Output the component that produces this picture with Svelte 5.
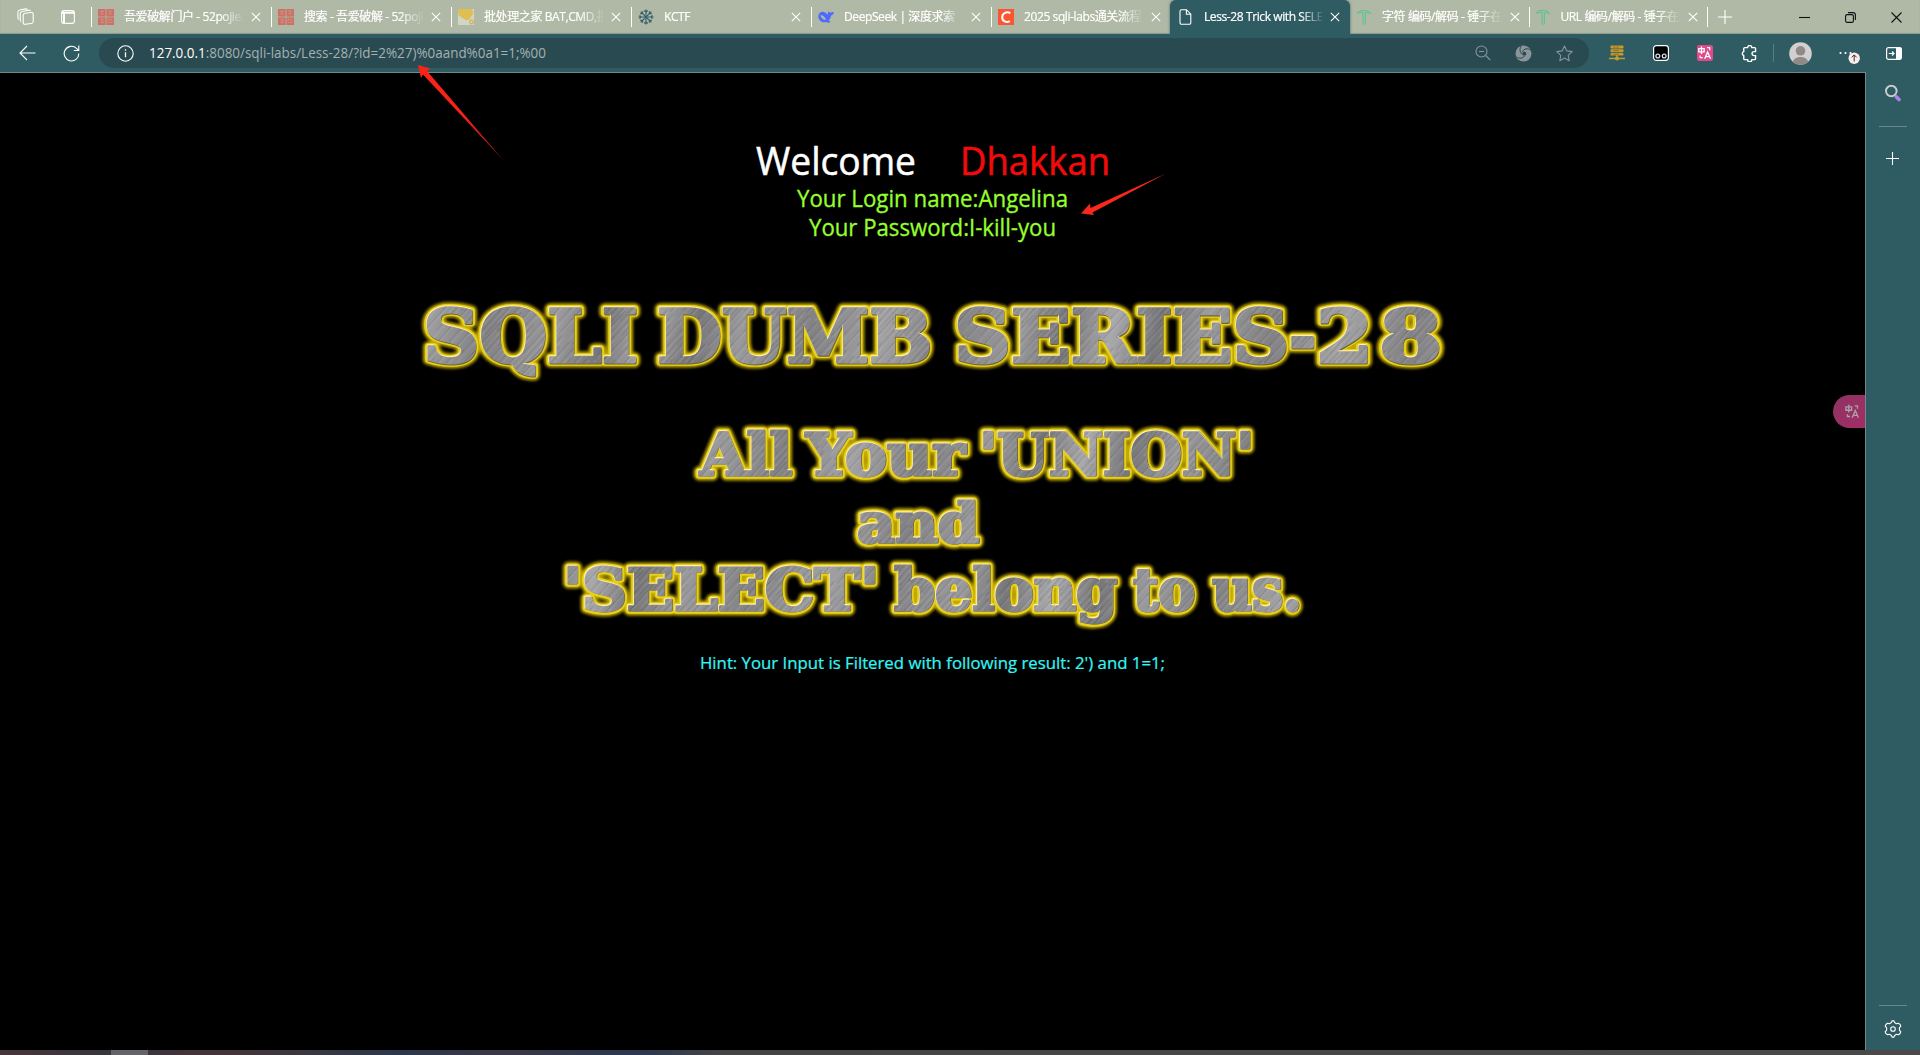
<script>
  const tabs = [
    { title: '吾爱破解门户 - 52pojie.cn', icon: 'seal' },
    { title: '搜索 - 吾爱破解 - 52pojie', icon: 'seal' },
    { title: '批处理之家 BAT,CMD,批处理', icon: 'batch' },
    { title: 'KCTF', icon: 'snow' },
    { title: 'DeepSeek | 深度求索', icon: 'whale' },
    { title: '2025 sqli-labs通关流程', icon: 'csdn' },
    { title: 'Less-28 Trick with SELECT', icon: 'page', active: true },
    { title: '字符 编码/解码 - 锤子在线', icon: 'hammer' },
    { title: 'URL 编码/解码 - 锤子在线', icon: 'hammer' },
  ];

  // Word placement on the banner artwork: baseline, left edge and width.
  const words = [
    { t: 'SQLI', x: 423, y: 290, w: 215, s: 72 },
    { t: 'DUMB', x: 657, y: 290, w: 275, s: 72 },
    { t: 'SERIES', x: 954, y: 290, w: 335, s: 72 },
    { t: '-', x: 1289, y: 290, w: 27, s: 72 },
    { t: '2', x: 1316, y: 290, w: 57, s: 72 },
    { t: '8', x: 1379, y: 290, w: 63, s: 72 },
    { t: 'All', x: 700, y: 402.5, w: 92, s: 57 },
    { t: 'Your', x: 806, y: 402.5, w: 159, s: 57 },
    { t: "'UNION'", x: 979, y: 402.5, w: 275, s: 57 },
    { t: 'and', x: 857, y: 469.5, w: 122, s: 55 },
    { t: "'SELECT'", x: 563, y: 537.5, w: 316, s: 57 },
    { t: 'belong', x: 894, y: 537.5, w: 223, s: 57 },
    { t: 'to', x: 1133, y: 537.5, w: 62, s: 57 },
    { t: 'us.', x: 1212, y: 537.5, w: 90, s: 57 },
  ];
</script>

{#snippet fit(text, w, size, color)}
  <svg class="fit" width={w} height={size * 1.3} fill={color} stroke={color} stroke-width={size / 75} font-size={size}>
    <text x="0" y={size} textLength={w} lengthAdjust="spacingAndGlyphs">{text}</text>
  </svg>
{/snippet}

{#snippet cross()}
  <svg width="10" height="10" viewBox="0 0 10 10" class="line"><path d="M.8.8 9.2 9.2M9.2.8.8 9.2" /></svg>
{/snippet}

{#snippet translate(c)}
  <g fill="none" stroke={c} stroke-width="1.3">
    <path d="M1.800 3.700h5.400v3.100H1.800zM4.500 1.600v7.400M10 2.700h2.700v2.600M3.200 10.500v2.200h2.600M7.700 13.800 10.600 7l2.900 6.800M8.700 11.600h3.800" />
  </g>
{/snippet}

{#snippet favicon(name)}
  <svg width="16" height="16" viewBox="0 0 16 16">
    {#if name === 'seal'}
      <rect width="7.600" height="7.600" fill="#cb7166" />
      <rect x="8.400" width="7.600" height="7.600" fill="#cb7166" />
      <rect y="8.400" width="7.600" height="7.600" fill="#cb7166" />
      <rect x="8.400" y="8.400" width="7.600" height="7.600" fill="#cb7166" />
      <path d="M1.500 2.500h4.600M2.500 5h3M4 1.200v5M10 2h4.500M10.500 4.500h3M12 1.200v5M2 10.700h4M2.200 13.200h4M4.200 9.700v5M10 10.500h4v3h-4z" stroke="#cf9c90" stroke-width=".6" fill="none" />
    {:else if name === 'batch'}
      <rect width="16" height="16" fill="#d2d4c4" />
      <path d="M0 0h14l1.500 3-1.500 3.500L10.500 11h-3L4.500 9 1 6.500 0 4z" fill="#dfbe52" />
      <circle cx="13.500" cy="13" r="1.800" fill="none" stroke="#d8ae4c" stroke-width="1.200" />
    {:else if name === 'snow'}
      <g stroke="#35606d" stroke-width="1.100" fill="none">
        {#each [0, 45, 90, 135, 180, 225, 270, 315] as a}
          <path d="M8 8V.5M6.300 1.500 8 3.200l1.700-1.700" transform={`rotate(${a} 8 8)`} />
        {/each}
      </g>
    {:else if name === 'whale'}
      <path d="M.3 7C.5 3.800 3.500 2 6.200 3c1.800.7 2.500 2.200 3.900 2.600C9.700 4.300 9.900 3.300 10.500 2.300c.7 1.300 1.700 1.600 2.700 1.200 1-.4 1.800-.6 2.600-.3-.3 1.900-1.300 3.200-2.800 3.400-.2 2.100-.9 3.600-2.100 4.800l1.500 1.700c-1.400.9-2.900.6-4-.2C4.300 14.500.1 11.500.3 7z" fill="#4d6bfe" />
      <path d="M2.300 6.300c2.600-.3 4.600 1.600 5.800 4.300-2 .8-4.600-.8-5.800-4.300z" fill="#b0b9a6" />
    {:else if name === 'csdn'}
      <rect width="16" height="16" fill="#fc5531" />
      <path d="M12.300 4.200C9 2.200 4.200 3.800 4.200 8.200c0 4.200 4 5.800 7.700 4" fill="none" stroke="#fff" stroke-width="2" />
    {:else if name === 'page'}
      <path d="M3.500.7h5l4.300 4.500v8.600a1.500 1.500 0 0 1-1.500 1.500H3.500A1.500 1.500 0 0 1 2 13.800V2.200A1.500 1.500 0 0 1 3.500.7zM8.400.9v4.400h4.300" fill="none" stroke="#fff" stroke-width="1.100" />
    {:else}
      <path d="M1 4.300C2.500 2 5 1.300 8 1.500c3-.1 5.500.9 7 3.300-2.200-1.200-4-1.300-5.500-1V14.500c-.6.800-1.900.8-2.500 0V3.800C5 3.400 2.700 3.500 1 4.300z" fill="#8cc5a2" stroke="#5fbb8d" stroke-width=".8" />
    {/if}
  </svg>
{/snippet}

<div class="browser">
  <div class="tabstrip">
    <div class="lead">
      <svg width="18" height="18" viewBox="0 0 18 18" class="line">
        <rect x="6.200" y="4.800" width="10" height="11" rx="2" transform="skewY(-7) translate(0 1.500)" />
        <path d="M4.200 13.500C3 13 3.200 12 3.200 11V6c0-1.500 1-2.200 2-2.500l6.500-1.300c1-.1 1.600.2 2 .9M1.900 11.500C.8 11 .9 10 .9 9V4.300C.9 3 1.700 2.200 2.700 2L8.500.9c.9-.1 1.500.1 2 .8" />
      </svg>
      <svg width="14" height="14" viewBox="0 0 14 14" class="line">
        <rect x=".6" y=".6" width="12.800" height="12.800" rx="2.500" />
        <path d="M.8 2.700h12.400M3 3v10.200" stroke-width="2" />
      </svg>
    </div>
    {#each tabs as tab, i}
      <div class="tab" class:active={tab.active} class:late={i > 6} class:nosep={tab.active || i === 7}>
        {@render favicon(tab.icon)}
        <span class="title">{tab.title}</span>
        {@render cross()}
      </div>
    {/each}
    <div class="newtab">
      <svg width="14" height="14" viewBox="0 0 14 14" class="line"><path d="M7 0v14M0 7h14" /></svg>
    </div>
    <div class="winctl">
      <svg width="11" height="11" viewBox="0 0 11 11"><path d="M0 5.500h11" /></svg>
      <svg width="11" height="11" viewBox="0 0 11 11"><rect x=".6" y="2.600" width="7.800" height="7.800" rx="1.500" /><path d="M3 .6h5.200a2.200 2.200 0 0 1 2.200 2.200V8" /></svg>
      <svg width="11" height="11" viewBox="0 0 11 11"><path d="M.5.5l10 10M10.500.5l-10 10" /></svg>
    </div>
  </div>

  <div class="toolbar">
    <div class="cell"><svg width="17" height="16" viewBox="0 0 17 16" class="line"><path d="M16.500 8H1M8 1 1 8l7 7" /></svg></div>
    <div class="cell"><svg width="17" height="17" viewBox="0 0 17 17" class="line"><path d="M15.800 8.500A7.300 7.300 0 1 1 13.500 3.300L15.800 5.500M15.800.5v5h-5" /></svg></div>
    <div class="address">
      <svg width="17" height="17" viewBox="0 0 17 17" class="line"><circle cx="8.500" cy="8.500" r="7.700" /><path d="M8.500 7.300v5M8.500 4.300v1.400" stroke-width="1.300" /></svg>
      <svg class="fit url" width="400" height="20" font-size="14" fill="#a3b1b3">
        <text x="0" y="15" textLength="397" lengthAdjust="spacingAndGlyphs"><tspan fill="#fff">127.0.0.1</tspan>:8080/sqli-labs/Less-28/?id=2%27)%0aand%0a1=1;%00</text>
      </svg>
      <svg width="16" height="16" viewBox="0 0 16 16" class="dim"><circle cx="6.500" cy="6.500" r="5.500" /><path d="M10.500 10.500 15.300 15M4 6.500h5" /></svg>
      <svg width="17" height="17" viewBox="0 0 17 17">
        <circle cx="8.500" cy="8.500" r="8" fill="#8b9499" />
        <circle cx="9.300" cy="8.700" r="2" fill="#294a50" />
        <path d="M7.500 6.800C9 3.600 12.500 2.800 15.800 5.200M7.300 9.500C5 7.500 4.300 4.500 6 1M9.500 11C7.500 13.500 4.500 13.800 1.500 12" fill="none" stroke="#294a50" stroke-width="1" />
      </svg>
      <svg width="17" height="17" viewBox="0 0 17 17" class="dim"><path d="m8.500 1 2.300 4.900 5.400.7-4 3.700 1 5.400-4.700-2.700-4.700 2.700 1-5.400-4-3.700 5.400-.7z" stroke-linejoin="round" /></svg>
    </div>
    <div class="cell ext">
      <svg width="16" height="16" viewBox="0 0 16 16"><g fill="#c79a2b"><rect x="1.500" y=".5" width="13" height="3" rx="1" /><rect x="1.500" y="4.200" width="13" height="3" rx="1" /><rect x="1.500" y="7.900" width="13" height="2.600" rx="1" /><rect x="7.200" y="10" width="1.600" height="3" /><rect y="12.700" width="16" height="1.500" /><circle cx="8" cy="13.500" r="2.100" /></g><path d="M4 2h6M4 5.700h6M4 9.200h6" stroke="#826d2c" stroke-width=".8" /></svg>
    </div>
    <div class="cell ext">
      <svg width="16" height="16" viewBox="0 0 16 16"><rect x=".6" y=".6" width="14.800" height="14.800" rx="2.800" stroke="#fff" stroke-width="1.200" /><circle cx="4.800" cy="11" r="1.900" stroke="#cde" stroke-width="1.300" /><circle cx="11.200" cy="11" r="1.900" stroke="#cde" stroke-width="1.300" /></svg>
    </div>
    <div class="cell ext">
      <svg width="16" height="16" viewBox="0 0 16 16"><rect width="16" height="16" rx="2" fill="#e0498b" />{@render translate('#fff')}</svg>
    </div>
    <div class="cell ext">
      <svg width="17" height="17" viewBox="0 0 16 16" class="line bold"><path d="M3.500 2.500h2.700a2 2 0 0 1 4 0h2.600a.9.900 0 0 1 .9.900v2.800h-1.400a1.900 1.900 0 0 0 0 3.800h1.400v2.900a.9.900 0 0 1-.9.900h-2.600a2 2 0 0 1-4 0H3.500a.9.900 0 0 1-.9-.9V10a2 2 0 0 1 0-3.800V3.400a.9.900 0 0 1 .9-.9z" /></svg>
    </div>
    <div class="bar"></div>
    <div class="cell avatar">
      <svg width="23" height="23" viewBox="0 0 23 23"><defs><clipPath id="face"><circle cx="11.500" cy="11.500" r="11.300" /></clipPath></defs><g clip-path="url(#face)"><rect width="23" height="23" fill="#d2d0cf" /><circle cx="11.500" cy="8.800" r="4.800" fill="#8f8a87" /><ellipse cx="11.500" cy="20" rx="7.500" ry="5" fill="#8f8a87" /></g></svg>
    </div>
    <div class="cell more">
      <svg width="22" height="22" viewBox="0 0 22 22"><g fill="#fff"><circle cx="2.500" cy="11" r="1.100" /><circle cx="7.500" cy="11" r="1.100" /><circle cx="12.500" cy="11" r="1.100" /></g><circle cx="16.200" cy="16.200" r="5.700" fill="#fdeeee" /><path d="M16.200 19.500V13.100M13.700 15.400l2.500-2.500 2.500 2.500" fill="none" stroke="#333" /></svg>
    </div>
    <div class="cell side-toggle">
      <svg width="16" height="13" viewBox="0 0 16 13"><rect x=".6" y=".6" width="14.800" height="11.800" rx="1.800" fill="none" stroke="#fff" stroke-width="1.200" /><path d="M10 .5h4.500l1 1v10l-1 1H10z" fill="#fff" /><path d="M2.800 6.500h5M6 4.500l2 2-2 2" fill="none" stroke="#fff" stroke-width="1.200" /></svg>
    </div>
  </div>

  <div class="body">
    <main>
      <div class="welcome">
        {@render fit('Welcome', 160, 38, '#fff')}
        {@render fit('Dhakkan', 150, 38, '#f30b0b')}
      </div>
      <div class="login">{@render fit('Your Login name:Angelina', 271, 23, '#96ff2d')}</div>
      <div class="login">{@render fit('Your Password:I-kill-you', 247, 23, '#96ff2d')}</div>

      <svg class="banner" width="1866" height="360" viewBox="0 217 1866 360">
        <defs>
          <linearGradient id="tone" gradientUnits="userSpaceOnUse" x1="420" y1="250" x2="640" y2="300" spreadMethod="reflect">
            <stop offset="0" stop-color="#a2a2a4" />
            <stop offset=".3" stop-color="#828284" />
            <stop offset=".6" stop-color="#9a9a9c" />
            <stop offset=".8" stop-color="#77777a" />
            <stop offset="1" stop-color="#a9a9ac" />
          </linearGradient>
          <pattern id="brush" width="17" height="90" patternUnits="userSpaceOnUse" patternTransform="rotate(42)">
            <path d="M2 0v60M7 20v70M11 0v34M14 40v50" stroke="#fff" stroke-width=".8" opacity=".12" />
            <path d="M4 10v70M9 0v50M12.500 30v60M16 0v40" stroke="#000" stroke-width=".8" opacity=".11" />
          </pattern>
          <filter id="halo" x="-5%" y="-5%" width="110%" height="110%"><feGaussianBlur stdDeviation="1.500" /></filter>
        </defs>
        <use href="#lettering" class="halo" />
        <use href="#lettering" class="rim" />
        <use href="#lettering" class="shade" />
        <use href="#lettering" class="edge" />
        <g class="metal">
          <g id="lettering">
            {#each words as w}
              <text x={w.x} y={w.y} font-size={w.s} textLength={w.w} lengthAdjust="spacingAndGlyphs">{w.t}</text>
            {/each}
          </g>
        </g>
        <use href="#lettering" class="brushed" />
      </svg>

      <div class="hint">{@render fit("Hint: Your Input is Filtered with following result: 2') and 1=1;", 465, 17, '#33f6f6')}</div>

      <div class="bubble"><svg width="17" height="17" viewBox="0 0 16 16">{@render translate('#aaa0a6')}</svg></div>
    </main>

    <aside>
      <svg class="find" width="18" height="18" viewBox="0 0 18 18"><path d="m12.500 13 2.500 2.500" stroke="#a987e8" stroke-width="3.600" stroke-linecap="round" /><circle cx="7.300" cy="7" r="5.300" fill="none" stroke="#c9cdd0" stroke-width="1.900" /></svg>
      <hr />
      <svg class="line add" width="13" height="13" viewBox="0 0 13 13"><path d="M6.500 0v13M0 6.500h13" /></svg>
      <hr class="low" />
      <svg class="line gear" width="18" height="18" viewBox="0 0 18 18"><path d="M7.400 2.600 8 .9h2l.6 1.700 1.900 1.100 1.900-.5 1.900 1.400.5 1.700-1.400 1.400v2.600l1.400 1.400-.9 2-1.500 1.100-1.900-.5-1.900 1.100-.6 1.700H8l-.6-1.700-1.900-1.100-1.900.5-1.900-1.400-.5-1.700 1.400-1.400V7.700L1.200 6.300l.9-2 1.500-1.100 1.900.5z" stroke-linejoin="round" /><circle cx="9" cy="9" r="2.300" /></svg>
    </aside>
  </div>
  <div class="taskbar"><i></i></div>

  <svg class="arrows" width="1200" height="250" viewBox="0 0 1200 250">
    <defs>
      <linearGradient id="fadeA" gradientUnits="userSpaceOnUse" x1="460" y1="110" x2="503" y2="160"><stop stop-color="#fb2318" /><stop offset="1" stop-color="#8d1a14" /></linearGradient>
    </defs>
    <path d="M418 65 430.500 68.500 427 71 504 161 423 74.500 421 78z" fill="url(#fadeA)" />
    <path d="M1081 213.500 1090 203.500 1090.500 208 1166 173.500 1092.500 212.500 1094 215z" fill="#f8281b" />
  </svg>
</div>

<style>
  :global(body) { margin: 0; background: #000; overflow: hidden; }
  .browser { position: relative; width: 1920px; height: 1055px; display: flex; flex-direction: column; background: #2f5b62; font-family: "Open Sans", "Noto Sans CJK SC", sans-serif; overflow: hidden; }
  svg { flex: none; display: block; }
  .line { fill: none; stroke: #fff; stroke-width: 1.1; }
  .line.bold { stroke-width: 1.3; }
  .dim { fill: none; stroke: #84969a; stroke-width: 1.1; }
  .fit { overflow: visible; white-space: pre; }

  .tabstrip { height: 34px; display: flex; background: #b0b9a6; box-shadow: inset 0 -1px 1px #8d9c90; flex: none; }
  .lead { width: 91px; box-sizing: border-box; padding-left: 17px; display: flex; align-items: center; gap: 26px; }
  .tab { width: 180px; box-sizing: border-box; padding: 0 10px 0 7px; display: flex; align-items: center; position: relative; color: #fff; }
  .tab.late { width: 178.5px; padding-right: 9px; }
  .tab.late, .tab.active { padding-left: 6px; }
  .tab::before { content: ""; position: absolute; left: 0; top: 7px; width: 1px; height: 20px; background: #fff; }
  .tab.nosep::before { display: none; }
  .tab.active { width: 180px; margin-left: -1px; padding-left: 8px; background: #2f5b62; border-radius: 6px 6px 0 0; box-shadow: 0 0 3px #4c6664; clip-path: inset(0 -4px 0 -4px); }
  .title { flex: 1; min-width: 0; margin: 0 8px 0 10px; font-size: 12px; letter-spacing: -.4px; line-height: 20px; white-space: nowrap; overflow: hidden; -webkit-text-stroke: .2px #fff; mask-image: linear-gradient(to right, #000 96px, transparent 121px); }
  .newtab { width: 36px; display: flex; align-items: center; justify-content: center; position: relative; }
  .newtab::before { content: ""; position: absolute; left: 0; top: 7px; width: 1px; height: 20px; background: #fff; }
  .winctl { margin-left: auto; padding-right: 18px; display: flex; align-items: center; gap: 35px; fill: none; stroke: #111; stroke-width: 1.1; }

  .toolbar { height: 38px; padding-left: 5px; display: flex; align-items: center; flex: none; }
  .cell { width: 44px; display: flex; align-items: center; justify-content: center; flex: none; }
  .address { width: 1490px; height: 30px; margin: 0 6px; box-sizing: border-box; padding: 0 16px 0 18px; border-radius: 15px; background: #294a50; display: flex; align-items: center; gap: 24px; flex: none; }
  .address .url { margin-right: auto; margin-left: -9px; }
  .bar { width: 1px; height: 18px; margin: 0 1px 0 2px; background: #5a7d82; }
  .avatar { width: 51px; }
  .more { width: 45px; }
  .side-toggle { width: 45px; }

  .body { flex: 1; min-height: 0; display: flex; }
  main { width: 1866px; box-sizing: border-box; border-top: 1px solid #71898c; border-right: 1px solid #71898c; background: #000; display: flex; flex-direction: column; align-items: center; position: relative; flex: none; }
  .welcome { margin-top: 64px; height: 47px; display: flex; gap: 44px; }
  .login { height: 29px; }
  .banner { margin-top: 47px; align-self: flex-start; overflow: visible; font-family: "DejaVu Serif", serif; font-weight: 700; stroke-linejoin: round; }
  .halo { fill: #b39a00; stroke: #c4aa00; stroke-width: 11; filter: url(#halo); }
  .rim { fill: #e7cf1d; stroke: #e7cf1d; stroke-width: 7.5; }
  .edge { fill: #fff3ac; stroke: #fff3ac; stroke-width: 3; transform: translate(-.6px, -.6px); }
  .shade { fill: #6d6439; stroke: #6d6439; stroke-width: 3; transform: translate(.6px, .6px); }
  .metal { fill: url(#tone); stroke: url(#tone); stroke-width: 2.8; }
  .brushed { fill: url(#brush); stroke: url(#brush); stroke-width: 2.8; }
  .hint { margin-top: 3px; }
  .bubble { position: absolute; right: 0; top: 322px; width: 32px; height: 33px; border-radius: 17px 0 0 17px; background: linear-gradient(135deg, #8c3561, #a32c66); display: flex; align-items: center; justify-content: flex-end; }
  .bubble svg { margin-right: 4px; }

  aside { flex: 1; display: flex; flex-direction: column; align-items: center; padding-right: 1px; }
  aside hr { width: 28px; height: 1px; border: 0; margin: 23px 0 0; background: #66878b; }
  .find { margin-top: 12px; }
  aside hr:not(.low) { margin-top: 24px; }
  .add { margin-top: 25px; }
  aside hr.low { margin-top: auto; }
  .gear { margin: 14px 0 12px; }

  .taskbar { height: 5px; flex: none; background: linear-gradient(90deg, #47363b 0, #38353c 100px, #45343a 220px, #383840 320px, #2d374b 400px, #3a3744 500px, #2b3850 640px, #444 720px, #494949); }
  .taskbar i { display: block; width: 37px; height: 5px; margin-left: 111px; background: #66636b; }
  .arrows { position: absolute; left: 0; top: 0; pointer-events: none; }
</style>
